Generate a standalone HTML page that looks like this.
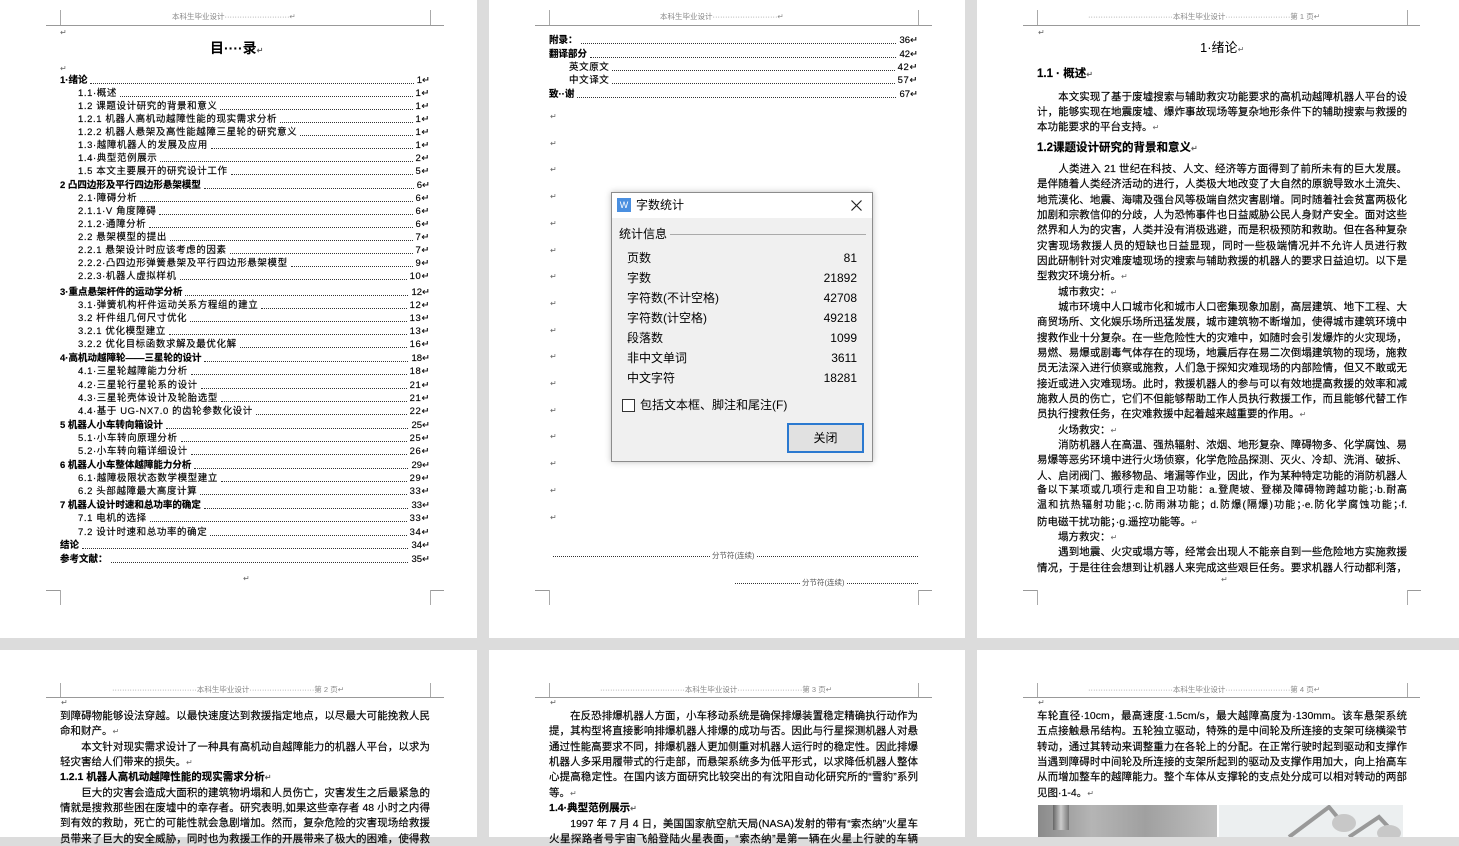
<!DOCTYPE html>
<html><head><meta charset="utf-8">
<style>
*{margin:0;padding:0;box-sizing:border-box}
body{width:1459px;height:837px;background:#dcdcdc;position:relative;overflow:hidden;font-family:"Liberation Sans","Noto Sans CJK SC",sans-serif;color:#000}
.pg{position:absolute;background:#fff;overflow:hidden}
.t{position:absolute;font-size:10.5px;line-height:14px;height:14px;white-space:nowrap;overflow:hidden;-webkit-text-stroke:0.15px #000}
.j{text-align:justify;text-align-last:justify;white-space:normal}
.b{font-weight:bold}
.hd{position:absolute;font-size:7.5px;color:#888;line-height:10px;white-space:nowrap}
.hl{position:absolute;height:1px;background:#999}
.vl{position:absolute;width:1px;background:#aaa}
.toc{position:absolute;display:flex;font-size:9.5px;line-height:12px;height:12px;white-space:nowrap;letter-spacing:0.6px;-webkit-text-stroke:0.15px #000}
.toc .ld{flex:1;border-bottom:1.5px dotted #333;margin:0 3px 3px 3px}
.toc.b{font-weight:bold;letter-spacing:0}
.pm{font-size:8px;color:#666;-webkit-text-stroke:0}
</style></head><body>

<div class="pg" style="left:0;top:0;width:477px;height:638px"></div>
<div class="pg" style="left:489px;top:0;width:476px;height:638px"></div>
<div class="pg" style="left:977px;top:0;width:482px;height:638px"></div>
<div class="pg" style="left:0;top:650px;width:477px;height:187px"></div>
<div class="pg" style="left:489px;top:650px;width:476px;height:187px"></div>
<div class="pg" style="left:977px;top:650px;width:482px;height:187px"></div>

<div class="hl" style="left:46px;top:25px;width:398px"></div>
<div class="vl" style="left:60px;top:10px;height:15px"></div>
<div class="vl" style="left:430px;top:10px;height:15px"></div>
<div class="hd" style="left:172px;top:12px">本科生毕业设计··························↵</div>

<div class="hl" style="left:535px;top:25px;width:397px"></div>
<div class="vl" style="left:549px;top:10px;height:15px"></div>
<div class="vl" style="left:918px;top:10px;height:15px"></div>
<div class="hd" style="left:660px;top:12px">本科生毕业设计··························↵</div>

<div class="hl" style="left:1023px;top:25px;width:397px"></div>
<div class="vl" style="left:1037px;top:10px;height:15px"></div>
<div class="vl" style="left:1407px;top:10px;height:15px"></div>
<div class="hd" style="left:1088px;top:12px">··································本科生毕业设计··························第 1 页↵</div>

<div class="hl" style="left:46px;top:590px;width:14px"></div><div class="vl" style="left:60px;top:590px;height:15px"></div>
<div class="hl" style="left:430px;top:590px;width:14px"></div><div class="vl" style="left:430px;top:590px;height:15px"></div>
<div class="hl" style="left:535px;top:590px;width:14px"></div><div class="vl" style="left:549px;top:590px;height:15px"></div>
<div class="hl" style="left:918px;top:590px;width:14px"></div><div class="vl" style="left:918px;top:590px;height:15px"></div>
<div class="hl" style="left:1023px;top:590px;width:14px"></div><div class="vl" style="left:1037px;top:590px;height:15px"></div>
<div class="hl" style="left:1407px;top:590px;width:14px"></div><div class="vl" style="left:1407px;top:590px;height:15px"></div>

<div class="hl" style="left:46px;top:697px;width:398px"></div>
<div class="vl" style="left:60px;top:683px;height:14px"></div>
<div class="vl" style="left:430px;top:683px;height:14px"></div>
<div class="hd" style="left:112px;top:685px">··································本科生毕业设计··························第 2 页↵</div>

<div class="hl" style="left:535px;top:697px;width:397px"></div>
<div class="vl" style="left:549px;top:683px;height:14px"></div>
<div class="vl" style="left:918px;top:683px;height:14px"></div>
<div class="hd" style="left:600px;top:685px">··································本科生毕业设计··························第 3 页↵</div>

<div class="hl" style="left:1023px;top:697px;width:397px"></div>
<div class="vl" style="left:1037px;top:683px;height:14px"></div>
<div class="vl" style="left:1407px;top:683px;height:14px"></div>
<div class="hd" style="left:1088px;top:685px">··································本科生毕业设计··························第 4 页↵</div>

<div class="pm" style="position:absolute;left:60px;top:28px">↵</div>
<div style="position:absolute;left:210px;top:39px;font-size:14px;font-weight:bold;line-height:18px">目····录<span class="pm">↵</span></div>
<div class="pm" style="position:absolute;left:60px;top:64px">↵</div>
<div class="toc b" style="left:60px;top:75px;width:370px"><span>1·绪论</span><span class="ld"></span><span style="font-weight:normal">1↵</span></div>
<div class="toc" style="left:78px;top:88px;width:352px"><span>1.1·概述</span><span class="ld"></span><span>1↵</span></div>
<div class="toc" style="left:78px;top:101px;width:352px"><span>1.2 课题设计研究的背景和意义</span><span class="ld"></span><span>1↵</span></div>
<div class="toc" style="left:78px;top:114px;width:352px"><span>1.2.1 机器人高机动越障性能的现实需求分析</span><span class="ld"></span><span>1↵</span></div>
<div class="toc" style="left:78px;top:127px;width:352px"><span>1.2.2 机器人悬架及高性能越障三星轮的研究意义</span><span class="ld"></span><span>1↵</span></div>
<div class="toc" style="left:78px;top:140px;width:352px"><span>1.3·越障机器人的发展及应用</span><span class="ld"></span><span>1↵</span></div>
<div class="toc" style="left:78px;top:153px;width:352px"><span>1.4·典型范例展示</span><span class="ld"></span><span>2↵</span></div>
<div class="toc" style="left:78px;top:166px;width:352px"><span>1.5 本文主要展开的研究设计工作</span><span class="ld"></span><span>5↵</span></div>
<div class="toc b" style="left:60px;top:180px;width:370px"><span>2 凸四边形及平行四边形悬架模型</span><span class="ld"></span><span style="font-weight:normal">6↵</span></div>
<div class="toc" style="left:78px;top:193px;width:352px"><span>2.1·障碍分析</span><span class="ld"></span><span>6↵</span></div>
<div class="toc" style="left:78px;top:206px;width:352px"><span>2.1.1·V 角度障碍</span><span class="ld"></span><span>6↵</span></div>
<div class="toc" style="left:78px;top:219px;width:352px"><span>2.1.2·通障分析</span><span class="ld"></span><span>6↵</span></div>
<div class="toc" style="left:78px;top:232px;width:352px"><span>2.2 悬架模型的提出</span><span class="ld"></span><span>7↵</span></div>
<div class="toc" style="left:78px;top:245px;width:352px"><span>2.2.1 悬架设计时应该考虑的因素</span><span class="ld"></span><span>7↵</span></div>
<div class="toc" style="left:78px;top:258px;width:352px"><span>2.2.2·凸四边形弹簧悬架及平行四边形悬架模型</span><span class="ld"></span><span>9↵</span></div>
<div class="toc" style="left:78px;top:271px;width:352px"><span>2.2.3·机器人虚拟样机</span><span class="ld"></span><span>10↵</span></div>
<div class="toc b" style="left:60px;top:287px;width:370px"><span>3·重点悬架杆件的运动学分析</span><span class="ld"></span><span style="font-weight:normal">12↵</span></div>
<div class="toc" style="left:78px;top:300px;width:352px"><span>3.1·弹簧机构杆件运动关系方程组的建立</span><span class="ld"></span><span>12↵</span></div>
<div class="toc" style="left:78px;top:313px;width:352px"><span>3.2 杆件组几何尺寸优化</span><span class="ld"></span><span>13↵</span></div>
<div class="toc" style="left:78px;top:326px;width:352px"><span>3.2.1 优化模型建立</span><span class="ld"></span><span>13↵</span></div>
<div class="toc" style="left:78px;top:339px;width:352px"><span>3.2.2 优化目标函数求解及最优化解</span><span class="ld"></span><span>16↵</span></div>
<div class="toc b" style="left:60px;top:353px;width:370px"><span>4·高机动越障轮——三星轮的设计</span><span class="ld"></span><span style="font-weight:normal">18↵</span></div>
<div class="toc" style="left:78px;top:366px;width:352px"><span>4.1·三星轮越障能力分析</span><span class="ld"></span><span>18↵</span></div>
<div class="toc" style="left:78px;top:380px;width:352px"><span>4.2·三星轮行星轮系的设计</span><span class="ld"></span><span>21↵</span></div>
<div class="toc" style="left:78px;top:393px;width:352px"><span>4.3·三星轮壳体设计及轮胎选型</span><span class="ld"></span><span>21↵</span></div>
<div class="toc" style="left:78px;top:406px;width:352px"><span>4.4·基于 UG-NX7.0 的齿轮参数化设计</span><span class="ld"></span><span>22↵</span></div>
<div class="toc b" style="left:60px;top:420px;width:370px"><span>5 机器人小车转向箱设计</span><span class="ld"></span><span style="font-weight:normal">25↵</span></div>
<div class="toc" style="left:78px;top:433px;width:352px"><span>5.1·小车转向原理分析</span><span class="ld"></span><span>25↵</span></div>
<div class="toc" style="left:78px;top:446px;width:352px"><span>5.2·小车转向箱详细设计</span><span class="ld"></span><span>26↵</span></div>
<div class="toc b" style="left:60px;top:460px;width:370px"><span>6 机器人小车整体越障能力分析</span><span class="ld"></span><span style="font-weight:normal">29↵</span></div>
<div class="toc" style="left:78px;top:473px;width:352px"><span>6.1·越障极限状态数学模型建立</span><span class="ld"></span><span>29↵</span></div>
<div class="toc" style="left:78px;top:486px;width:352px"><span>6.2 头部越障最大高度计算</span><span class="ld"></span><span>33↵</span></div>
<div class="toc b" style="left:60px;top:500px;width:370px"><span>7 机器人设计时速和总功率的确定</span><span class="ld"></span><span style="font-weight:normal">33↵</span></div>
<div class="toc" style="left:78px;top:513px;width:352px"><span>7.1 电机的选择</span><span class="ld"></span><span>33↵</span></div>
<div class="toc" style="left:78px;top:527px;width:352px"><span>7.2 设计时速和总功率的确定</span><span class="ld"></span><span>34↵</span></div>
<div class="toc b" style="left:60px;top:540px;width:370px"><span>结论</span><span class="ld"></span><span style="font-weight:normal">34↵</span></div>
<div class="toc b" style="left:60px;top:554px;width:370px"><span>参考文献：</span><span class="ld"></span><span style="font-weight:normal">35↵</span></div>
<div class="pm" style="position:absolute;left:243px;top:574px">↵</div>

<div class="toc b" style="left:549px;top:35px;width:369px"><span>附录：</span><span class="ld"></span><span style="font-weight:normal">36↵</span></div>
<div class="toc b" style="left:549px;top:49px;width:369px"><span>翻译部分</span><span class="ld"></span><span style="font-weight:normal">42↵</span></div>
<div class="toc" style="left:569px;top:62px;width:349px"><span>英文原文</span><span class="ld"></span><span>42↵</span></div>
<div class="toc" style="left:569px;top:75px;width:349px"><span>中文译文</span><span class="ld"></span><span>57↵</span></div>
<div class="toc b" style="left:549px;top:89px;width:369px"><span>致··谢</span><span class="ld"></span><span style="font-weight:normal">67↵</span></div>
<div class="pm" style="position:absolute;left:550px;top:104px;line-height:26.7px">↵<br>↵<br>↵<br>↵<br>↵<br>↵<br>↵<br>↵<br>↵<br>↵<br>↵<br>↵<br>↵<br>↵<br>↵<br>↵</div>
<div style="position:absolute;left:553px;top:556px;width:365px;border-bottom:1px dotted #333"></div>
<div style="position:absolute;left:710px;top:550px;background:#fff;font-size:7.5px;color:#555;padding:0 2px">分节符(连续)</div>
<div style="position:absolute;left:735px;top:583px;width:183px;border-bottom:1px dotted #333"></div>
<div style="position:absolute;left:800px;top:577px;background:#fff;font-size:7.5px;color:#555;padding:0 2px">分节符(连续)</div>

<div class="pm" style="position:absolute;left:1038px;top:28px">↵</div>
<div style="position:absolute;left:1200px;top:40px;font-size:13px;line-height:16px">1·绪论<span class="pm">↵</span></div>
<div class="t b" style="left:1037px;top:67px;font-size:11.5px">1.1 · 概述<span class="pm">↵</span></div>
<div class="t j" style="left:1037px;top:90px;width:370px">　　本文实现了基于废墟搜索与辅助救灾功能要求的高机动越障机器人平台的设</div>
<div class="t j" style="left:1037px;top:105px;width:370px">计，能够实现在地震废墟、爆炸事故现场等复杂地形条件下的辅助搜索与救援的基</div>
<div class="t" style="left:1037px;top:120px">本功能要求的平台支持。<span class="pm">↵</span></div>
<div class="t b" style="left:1037px;top:141px;font-size:11.5px">1.2课题设计研究的背景和意义<span class="pm">↵</span></div>
<div class="t j" style="left:1037px;top:162px;width:370px">　　人类进入 21 世纪在科技、人文、经济等方面得到了前所未有的巨大发展。但</div>
<div class="t j" style="left:1037px;top:177px;width:370px">是伴随着人类经济活动的进行，人类极大地改变了大自然的原貌导致水土流失、土</div>
<div class="t j" style="left:1037px;top:193px;width:370px">地荒漠化、地震、海啸及强台风等极端自然灾害剧增。同时随着社会贫富两极化的</div>
<div class="t j" style="left:1037px;top:208px;width:370px">加剧和宗教信仰的分歧，人为恐怖事件也日益威胁公民人身财产安全。面对这些自</div>
<div class="t j" style="left:1037px;top:223px;width:370px">然界和人为的灾害，人类并没有消极逃避，而是积极预防和救助。但在各种复杂的</div>
<div class="t j" style="left:1037px;top:239px;width:370px">灾害现场救援人员的短缺也日益显现，同时一些极端情况并不允许人员进行救助。</div>
<div class="t j" style="left:1037px;top:254px;width:370px">因此研制针对灾难废墟现场的搜索与辅助救援的机器人的要求日益迫切。以下是典</div>
<div class="t" style="left:1037px;top:269px">型救灾环境分析。<span class="pm">↵</span></div>
<div class="t" style="left:1037px;top:285px">　　城市救灾：<span class="pm">↵</span></div>
<div class="t j" style="left:1037px;top:300px;width:370px">　　城市环境中人口城市化和城市人口密集现象加剧，高层建筑、地下工程、大型</div>
<div class="t j" style="left:1037px;top:315px;width:370px">商贸场所、文化娱乐场所迅猛发展，城市建筑物不断增加，使得城市建筑环境中的</div>
<div class="t j" style="left:1037px;top:331px;width:370px">搜救作业十分复杂。在一些危险性大的灾难中，如随时会引发爆炸的火灾现场，有</div>
<div class="t j" style="left:1037px;top:346px;width:370px">易燃、易爆或剧毒气体存在的现场，地震后存在易二次倒塌建筑物的现场，施救人</div>
<div class="t j" style="left:1037px;top:361px;width:370px">员无法深入进行侦察或施救，人们急于探知灾难现场的内部险情，但又不敢或无法</div>
<div class="t j" style="left:1037px;top:377px;width:370px">接近或进入灾难现场。此时，救援机器人的参与可以有效地提高救援的效率和减少</div>
<div class="t j" style="left:1037px;top:392px;width:370px">施救人员的伤亡，它们不但能够帮助工作人员执行救援工作，而且能够代替工作人</div>
<div class="t" style="left:1037px;top:407px">员执行搜救任务，在灾难救援中起着越来越重要的作用。<span class="pm">↵</span></div>
<div class="t" style="left:1037px;top:423px">　　火场救灾：<span class="pm">↵</span></div>
<div class="t j" style="left:1037px;top:438px;width:370px">　　消防机器人在高温、强热辐射、浓烟、地形复杂、障碍物多、化学腐蚀、易燃</div>
<div class="t j" style="left:1037px;top:453px;width:370px">易爆等恶劣环境中进行火场侦察，化学危险品探测、灭火、冷却、洗消、破拆、救</div>
<div class="t j" style="left:1037px;top:469px;width:370px">人、启闭阀门、搬移物品、堵漏等作业，因此，作为某种特定功能的消防机器人具</div>
<div class="t j" style="left:1037px;top:484px;width:370px;font-size:10px">备以下某项或几项行走和自卫功能：a.登爬坡、登梯及障碍物跨越功能；·b.耐高</div>
<div class="t j" style="left:1037px;top:499px;width:370px;font-size:10px">温和抗热辐射功能；·c.防雨淋功能；d.防爆(隔爆)功能；·e.防化学腐蚀功能；·f.</div>
<div class="t" style="left:1037px;top:515px">防电磁干扰功能；·g.遥控功能等。<span class="pm">↵</span></div>
<div class="t" style="left:1037px;top:530px">　　塌方救灾：<span class="pm">↵</span></div>
<div class="t j" style="left:1037px;top:545px;width:370px">　　遇到地震、火灾或塌方等，经常会出现人不能亲自到一些危险地方实施救援的</div>
<div class="t j" style="left:1037px;top:561px;width:370px">情况，于是往往会想到让机器人来完成这些艰巨任务。要求机器人行动都利落，遇</div>
<div class="pm" style="position:absolute;left:1221px;top:575px">↵</div>

<div class="pm" style="position:absolute;left:61px;top:698px">↵</div>
<div class="t j" style="left:60px;top:709px;width:370px">到障碍物能够设法穿越。以最快速度达到救援指定地点，以尽最大可能挽救人民生</div>
<div class="t" style="left:60px;top:724px">命和财产。<span class="pm">↵</span></div>
<div class="t j" style="left:60px;top:740px;width:370px">　　本文针对现实需求设计了一种具有高机动自越障能力的机器人平台，以求为减</div>
<div class="t" style="left:60px;top:755px">轻灾害给人们带来的损失。<span class="pm">↵</span></div>
<div class="t b" style="left:60px;top:770px">1.2.1 机器人高机动越障性能的现实需求分析<span class="pm">↵</span></div>
<div class="t j" style="left:60px;top:786px;width:370px">　　巨大的灾害会造成大面积的建筑物坍塌和人员伤亡，灾害发生之后最紧急的事</div>
<div class="t j" style="left:60px;top:801px;width:370px">情就是搜救那些困在废墟中的幸存者。研究表明,如果这些幸存者 48 小时之内得不</div>
<div class="t j" style="left:60px;top:816px;width:370px">到有效的救助，死亡的可能性就会急剧增加。然而，复杂危险的灾害现场给救援人</div>
<div class="t j" style="left:60px;top:832px;width:370px">员带来了巨大的安全威胁，同时也为救援工作的开展带来了极大的困难，使得救援</div>

<div class="pm" style="position:absolute;left:550px;top:698px">↵</div>
<div class="t j" style="left:549px;top:709px;width:369px">　　在反恐排爆机器人方面，小车移动系统是确保排爆装置稳定精确执行动作为前</div>
<div class="t j" style="left:549px;top:724px;width:369px">提，其构型将直接影响排爆机器人排爆的成功与否。因此与行星探测机器人对悬架</div>
<div class="t j" style="left:549px;top:740px;width:369px">通过性能高要求不同，排爆机器人更加侧重对机器人运行时的稳定性。因此排爆类</div>
<div class="t j" style="left:549px;top:755px;width:369px">机器人多采用履带式的行走部，而悬架系统多为低平形式，以求降低机器人整体重</div>
<div class="t j" style="left:549px;top:770px;width:369px">心提高稳定性。在国内该方面研究比较突出的有沈阳自动化研究所的“雪豹”系列</div>
<div class="t" style="left:549px;top:786px">等。<span class="pm">↵</span></div>
<div class="t b" style="left:549px;top:801px">1.4·典型范例展示<span class="pm">↵</span></div>
<div class="t j" style="left:549px;top:817px;width:369px">　　1997 年 7 月 4 日，美国国家航空航天局(NASA)发射的带有“索杰纳”火星车的</div>
<div class="t j" style="left:549px;top:832px;width:369px">火星探路者号宇宙飞船登陆火星表面，“索杰纳”是第一辆在火星上行驶的车辆</div>

<div class="pm" style="position:absolute;left:1038px;top:698px">↵</div>
<div class="t j" style="left:1037px;top:709px;width:370px">车轮直径·10cm，最高速度·1.5cm/s，最大越障高度为·130mm。该车悬架系统采用</div>
<div class="t j" style="left:1037px;top:724px;width:370px">五点接触悬吊结构。五轮独立驱动，特殊的是中间轮及所连接的支架可绕横梁节点</div>
<div class="t j" style="left:1037px;top:740px;width:370px">转动，通过其转动来调整重力在各轮上的分配。在正常行驶时起到驱动和支撑作用，</div>
<div class="t j" style="left:1037px;top:755px;width:370px">当遇到障碍时中间轮及所连接的支架所起到的驱动及支撑作用加大，向上抬高车体，</div>
<div class="t j" style="left:1037px;top:770px;width:370px">从而增加整车的越障能力。整个车体从支撑轮的支点处分成可以相对转动的两部分，</div>
<div class="t" style="left:1037px;top:786px">见图·1-4。<span class="pm">↵</span></div>
<div style="position:absolute;left:1038px;top:805px;width:179px;height:32px;background:linear-gradient(90deg,#8a8a8a,#b5b5b5 30%,#a0a0a0 60%,#c0c0c0)"></div>
<div style="position:absolute;left:1053px;top:805px;width:16px;height:25px;background:linear-gradient(90deg,#666,#ccc,#777)"></div>
<div style="position:absolute;left:1219px;top:805px;width:184px;height:32px;background:#eceff0"></div>
<svg style="position:absolute;left:1219px;top:805px" width="184" height="32"><path d="M70 32 L110 2 L125 20 M130 32 L160 12 L175 28" stroke="#999" stroke-width="4" fill="none"/><ellipse cx="125" cy="18" rx="12" ry="9" fill="#c8c8c8"/><ellipse cx="170" cy="28" rx="12" ry="8" fill="#c8c8c8"/></svg>

<div style="position:absolute;left:611px;top:192px;width:262px;height:270px;border:1px solid #8c8c8c;background:#f0f0f0;box-shadow:0 0 6px rgba(0,0,0,.25)">
  <div style="position:absolute;left:0;top:0;width:260px;height:25px;background:#fff"></div>
  <div style="position:absolute;left:5px;top:5px;width:14px;height:14px;background:#4a8fe0;color:#fff;font-size:9px;line-height:14px;text-align:center">W</div>
  <div style="position:absolute;left:24px;top:4px;font-size:12px;line-height:16px">字数统计</div>
  <svg style="position:absolute;left:239px;top:7px" width="11" height="11"><path d="M0.5 0.5 L10.5 10.5 M10.5 0.5 L0.5 10.5" stroke="#222" stroke-width="1.2"/></svg>
  <div style="position:absolute;left:7px;top:33px;font-size:12px;line-height:16px">统计信息</div>
  <div style="position:absolute;left:58px;top:41px;width:196px;height:1px;background:#aaa"></div>
  <div style="position:absolute;left:15px;top:55px;width:230px;font-size:12px;line-height:20px">
    <div style="display:flex;justify-content:space-between"><span>页数</span><span>81</span></div>
    <div style="display:flex;justify-content:space-between"><span>字数</span><span>21892</span></div>
    <div style="display:flex;justify-content:space-between"><span>字符数(不计空格)</span><span>42708</span></div>
    <div style="display:flex;justify-content:space-between"><span>字符数(计空格)</span><span>49218</span></div>
    <div style="display:flex;justify-content:space-between"><span>段落数</span><span>1099</span></div>
    <div style="display:flex;justify-content:space-between"><span>非中文单词</span><span>3611</span></div>
    <div style="display:flex;justify-content:space-between"><span>中文字符</span><span>18281</span></div>
  </div>
  <div style="position:absolute;left:10px;top:206px;width:13px;height:13px;border:1px solid #333;background:#fff"></div>
  <div style="position:absolute;left:28px;top:204px;font-size:12px;line-height:16px">包括文本框、脚注和尾注(F)</div>
  <div style="position:absolute;left:175px;top:230px;width:77px;height:30px;border:2px solid #2b79d0;background:#e1e1e1;font-size:12px;line-height:26px;text-align:center">关闭</div>
</div>

</body></html>
